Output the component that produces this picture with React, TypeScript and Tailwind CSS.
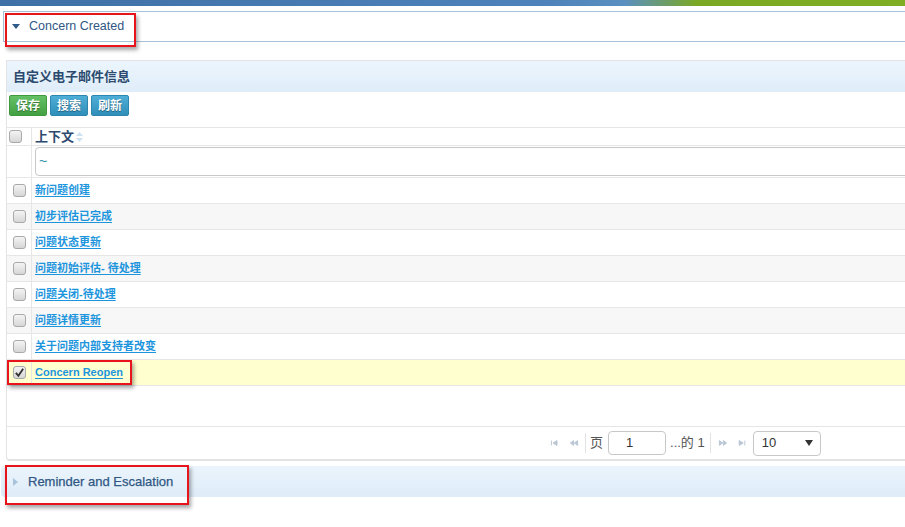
import React from "react"

const FONT = "font-['Liberation_Sans','Noto_Sans_CJK_SC',sans-serif]"

const rows = [
  "新问题创建",
  "初步评估已完成",
  "问题状态更新",
  "问题初始评估- 待处理",
  "问题关闭-待处理",
  "问题详情更新",
  "关于问题内部支持者改变",
  "Concern Reopen",
]

function Checkbox({ checked }: { checked?: boolean }) {
  return (
    <span className="flex h-[13px] w-[13px] items-center justify-center rounded-[3px] border border-[#a9a9a9] bg-[linear-gradient(#f4f4f4,#d6d6d6)]">
      {checked && (
        <svg viewBox="0 0 12 12" className="h-[11px] w-[11px]">
          <path d="M2 6.5 L4.8 9.5 L10 2" fill="none" stroke="#333" strokeWidth="2" />
        </svg>
      )}
    </span>
  )
}

function Annot({ className }: { className: string }) {
  return (
    <div
      className={`pointer-events-none absolute border-[2px] border-[#e8141b] shadow-[2px_3px_4px_rgba(0,0,0,0.35)] ${className}`}
    />
  )
}

function PagerIcon({ kind }: { kind: "first" | "prev" | "next" | "last" }) {
  const paths: Record<string, string> = {
    first: "M1 2 V8 M8 2 L3 5 L8 8 Z",
    prev: "M5 2 L1 5 L5 8 Z M10 2 L6 5 L10 8 Z",
    next: "M1 2 L5 5 L1 8 Z M6 2 L10 5 L6 8 Z",
    last: "M2 2 L7 5 L2 8 Z M9 2 V8",
  }
  return (
    <svg viewBox="0 0 11 10" className="h-[8px] w-[10px]">
      <path d={paths[kind]} fill="#b9c6d3" stroke="#b9c6d3" strokeWidth="1.2" />
    </svg>
  )
}

export default function App() {
  return (
    <div className={`relative h-[527px] w-[905px] overflow-hidden bg-white ${FONT}`}>
      {/* top brand strip */}
      <div className="h-[6px] bg-[linear-gradient(to_right,#3f70a6_0%,#4d82ba_60%,#5a8fc0_69%,#7ba823_77%,#7fae22_100%)]" />

      {/* Concern Created header */}
      <div className="ml-[3px] mt-[5px] flex h-[31px] items-center border-y border-l border-[#a8c0d8] pl-[8px]">
        <svg viewBox="0 0 8 5" className="mr-[9px] h-[5px] w-[8px]">
          <path d="M0 0 H8 L4 5 Z" fill="#2f5b88" />
        </svg>
        <span className="text-[12.5px] text-[#2f5784]">Concern Created</span>
      </div>

      {/* email panel */}
      <div className="ml-[6px] mt-[18px] w-[905px] rounded-bl-[4px] border-b-[2px] border-l border-t border-[#e3e3e3]">
        <div className="flex h-[31px] items-center bg-[linear-gradient(#ecf5fd,#dfedf9)] pl-[6px] text-[13px] font-bold text-[#2c4a6e]">
          自定义电子邮件信息
        </div>

        <div className="flex h-[35px] items-start gap-[3px] pl-[2px] pt-[3px]">
          <button className="h-[21px] w-[38px] rounded-[2px] border border-[#3f9a3f] bg-[linear-gradient(#66c166,#42a042)] text-[12px] font-bold text-white [text-shadow:0_1px_1px_rgba(0,0,0,0.4)]">
            保存
          </button>
          <button className="h-[21px] w-[38px] rounded-[2px] border border-[#2c86ad] bg-[linear-gradient(#4eaed6,#2f8fba)] text-[12px] font-bold text-white [text-shadow:0_1px_1px_rgba(0,0,0,0.4)]">
            搜索
          </button>
          <button className="h-[21px] w-[38px] rounded-[2px] border border-[#2c86ad] bg-[linear-gradient(#4eaed6,#2f8fba)] text-[12px] font-bold text-white [text-shadow:0_1px_1px_rgba(0,0,0,0.4)]">
            刷新
          </button>
        </div>

        {/* table */}
        <div className="border-t border-[#e6e6e6]">
          <div className="flex h-[18px] border-b border-[#e6e6e6]">
            <div className="flex w-[25px] items-center border-r border-[#e6e6e6] pl-[2px]">
              <Checkbox />
            </div>
            <div className="flex items-center pl-[3px] text-[13px] font-bold text-[#2c4a6e]">
              上下文
              <svg viewBox="0 0 7 10" className="ml-[2px] h-[10px] w-[7px]">
                <path d="M0 4 L3.5 0 L7 4 Z M0 6 L3.5 10 L7 6 Z" fill="#cfe0ee" />
              </svg>
            </div>
          </div>
          <div className="flex h-[32px] border-b border-[#e6e6e6]">
            <div className="w-[25px] border-r border-[#e6e6e6]" />
            <div className="flex-1 py-[1px] pl-[3px]">
              <div className="flex h-[29px] items-center rounded-[4px] border border-[#c8c8c8] pl-[3px] text-[14px] text-[#2a8fa8]">
                ~
              </div>
            </div>
          </div>
          {rows.map((r, i) => (
            <div
              key={r}
              className={`flex h-[26px] border-b border-[#e6e6e6] ${
                i === 7 ? "bg-[#ffffd0]" : i % 2 === 1 ? "bg-[#f7f7f7]" : "bg-white"
              }`}
            >
              <div className="flex w-[25px] items-center justify-end border-r border-[#e6e6e6] pr-[5px]">
                <Checkbox checked={i === 7} />
              </div>
              <div className="flex items-center pl-[3px]">
                <a className="text-[11px] font-bold text-[#1d95dd] underline underline-offset-[2px]">{r}</a>
              </div>
            </div>
          ))}
          <div className="h-[41px] border-b border-[#e6e6e6]">
            <div className="h-full w-[25px]" />
          </div>

          {/* pager */}
          <div className="flex h-[32px] items-center pl-[543px] text-[12px] text-[#555]">
            <PagerIcon kind="first" />
            <span className="ml-[9px]">
              <PagerIcon kind="prev" />
            </span>
            <span className="ml-[6px] mr-[4px] h-[20px] border-l border-[#e3e3e3]" />
            <span className="text-[13px]">页</span>
            <div className="ml-[5px] flex h-[24px] w-[58px] items-center rounded-[4px] border border-[#c8c8c8] pl-[17px] text-[13px] text-[#333]">
              1
            </div>
            <span className="ml-[4px] text-[13px]">...的 1</span>
            <span className="ml-[5px] mr-[7px] h-[20px] border-l border-[#e3e3e3]" />
            <PagerIcon kind="next" />
            <span className="ml-[9px]">
              <PagerIcon kind="last" />
            </span>
            <div className="ml-[6px] flex h-[25px] w-[68px] items-center justify-between rounded-[4px] border border-[#c8c8c8] pl-[8px] pr-[7px] text-[13px] text-[#333]">
              10
              <svg viewBox="0 0 8 6" className="h-[6px] w-[8px]">
                <path d="M0 0 H8 L4 6 Z" fill="#333" />
              </svg>
            </div>
          </div>
        </div>
      </div>

      {/* Reminder and Escalation */}
      <div className="ml-[1px] mt-[5px] flex h-[31px] items-center rounded-l-[4px] bg-[linear-gradient(#ebf4fc,#deecf8)] pl-[12px]">
        <svg viewBox="0 0 5 8" className="mr-[10px] h-[8px] w-[5px]">
          <path d="M0 0 L5 4 L0 8 Z" fill="#a9c3dc" />
        </svg>
        <span className="text-[13px] text-[#2f5784] [-webkit-text-stroke:0.25px_#2f5784]">Reminder and Escalation</span>
      </div>

      {/* annotation boxes */}
      <Annot className="left-[5px] top-[13px] h-[34px] w-[131px]" />
      <Annot className="left-[7px] top-[360px] h-[25px] w-[125px]" />
      <Annot className="left-[5px] top-[465px] h-[40px] w-[184px]" />
    </div>
  )
}
